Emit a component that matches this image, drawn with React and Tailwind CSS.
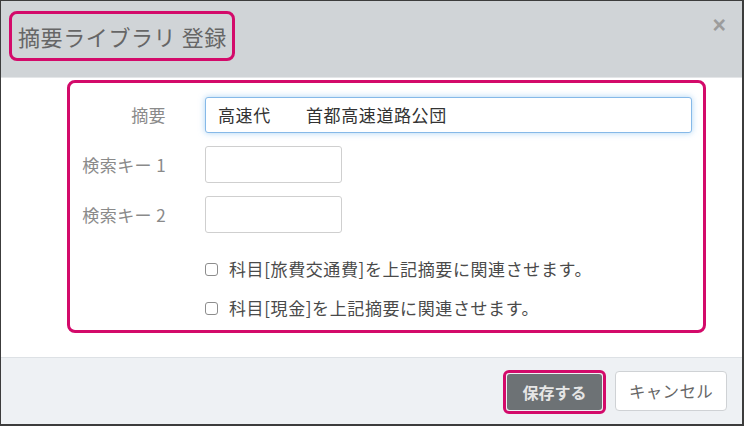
import React from 'react';

const pink = 'border-[#d30a6a]';

const Field = ({ label, children }) => (
    <div className="flex items-center">
        <div className="w-[96px] text-right text-[17px] tracking-[0.4px] text-[#8a8a8a]">{label}</div>
        <div className="ml-[39px] flex-1">{children}</div>
    </div>
);

const Check = ({ text }) => (
    <label className="flex items-center h-[22px]">
        <span className="w-[13px] h-[13px] border border-[#8d8d8d] rounded-[3px] bg-white" />
        <span className="ml-[11px] text-[17px] tracking-[0.6px] text-[#4a4a4a]">{text}</span>
    </label>
);

const App = () => {
    return (
        <div className="w-[745px] h-[428px] bg-white" style={{ fontFamily: '"Noto Sans CJK JP", "Noto Sans", sans-serif' }}>
            <div className="w-[744px] h-[426px] border-t border-l border-r-2 border-b-2 border-[#3c3c3c] flex flex-col">
                {/* header */}
                <div className="h-[77px] bg-[#d0d4d7] border-b border-[#e4e6e8] flex items-start justify-between pl-[8px] pt-[10px] pr-[16px]">
                    <div className={`h-[50px] w-[226px] border-[3px] ${pink} rounded-[8px] flex items-center pl-[6px]`}>
                        <span className="text-[22px] tracking-[0.6px] text-[#666] leading-none">摘要ライブラリ 登録</span>
                    </div>
                    <span className="text-[23px] font-bold text-[#9c9c9c] leading-none mt-[3px]" style={{ fontFamily: '"Liberation Sans", sans-serif' }}>×</span>
                </div>

                {/* body */}
                <div className="h-[279px] bg-white pt-[2px] pl-[66px]">
                    <div className={`w-[639px] h-[253px] border-[3px] ${pink} rounded-[8px] pt-[14px] pr-[11px]`}>
                        <div className="flex flex-col gap-[13px]">
                            <Field label="摘要">
                                <div className="h-[36px] border border-[#86b9e8] rounded-[3px] bg-white shadow-[0_0_6px_rgba(102,175,233,0.55)] flex items-center pl-[12px] text-[17px] tracking-[0.6px] text-[#333]">
                                    高速代　　首都高速道路公団
                                </div>
                            </Field>
                            <Field label="検索キー 1">
                                <div className="w-[137px] h-[37px] border border-[#cfcfcf] rounded-[3px] bg-white" />
                            </Field>
                            <Field label="検索キー 2">
                                <div className="w-[137px] h-[37px] border border-[#cfcfcf] rounded-[3px] bg-white" />
                            </Field>
                        </div>
                        <div className="ml-[135px] mt-[25px] flex flex-col gap-[17px]">
                            <Check text="科目[旅費交通費]を上記摘要に関連させます。" />
                            <Check text="科目[現金]を上記摘要に関連させます。" />
                        </div>
                    </div>
                </div>

                {/* footer */}
                <div className="flex-1 bg-[#eef1f4] border-t border-[#dde1e5] flex items-center justify-end pr-[15px] gap-[9px]">
                    <div className={`w-[103px] h-[44px] border-[3px] ${pink} rounded-[6px] p-[1px] mt-[2px]`}>
                        <button className="w-full h-full bg-[#6d7275] rounded-[3px] text-[16px] font-bold text-[#e6e6e6]">保存する</button>
                    </div>
                    <button className="w-[112px] h-[40px] bg-white border border-[#cfd2d5] rounded-[4px] text-[16.5px] tracking-[0.3px] text-[#666]">キャンセル</button>
                </div>
            </div>
        </div>
    );
};

export default App;
